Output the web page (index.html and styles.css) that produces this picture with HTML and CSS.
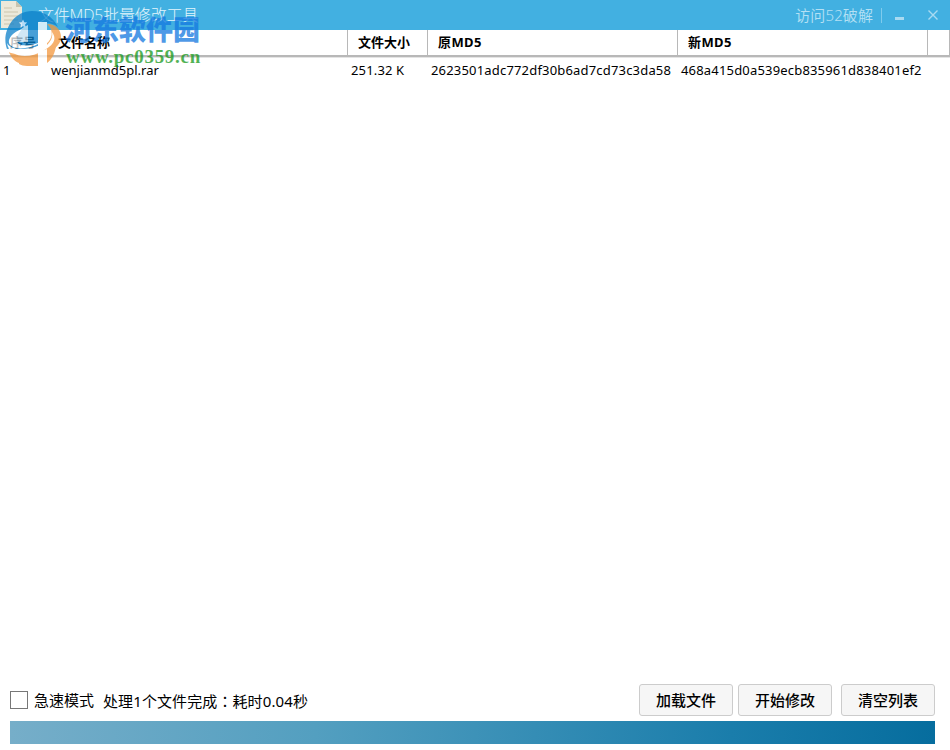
FILE: index.html
```html
<!DOCTYPE html>
<html lang="zh-CN">
<head>
  <meta charset="UTF-8">
  <title>文件MD5批量修改工具</title>
  <link rel="stylesheet" href="styles.css">
</head>
<body>
  <div class="window">
    <header class="titlebar">
      <svg class="app-icon" width="24" height="30" viewBox="0 0 24 30">
        <path d="M1 1h15l6 6v21H1z" fill="#ece9da"/>
        <path d="M16 1v6h6z" fill="#c9c4ae"/>
        <path d="M4 8h8M4 12h14M4 16h14M4 20h14M4 24h10" stroke="#d6d1bc" stroke-width="1.5"/>
      </svg>
      <h1>文件MD5批量修改工具</h1>
      <a class="visit">访问52破解</a>
      <span class="divider"></span>
      <svg class="win-btns" width="56" height="30" viewBox="0 0 56 30">
        <rect x="13" y="17" width="9" height="3" fill="#a9daf1"/>
        <path d="M46.5 10.5l9 9M55.5 10.5l-9 9" stroke="#a9daf1" stroke-width="1.4"/>
      </svg>
    </header>

    <div class="grid head">
      <div>序号</div>
      <div>文件名称</div>
      <div>文件大小</div>
      <div>原MD5</div>
      <div>新MD5</div>
      <div></div>
    </div>
    <div class="grid row">
      <div>1</div>
      <div class="name">wenjianmd5pl.rar</div>
      <div class="size">251.32 K</div>
      <div class="md5">2623501adc772df30b6ad7cd73c3da58</div>
      <div class="md5">468a415d0a539ecb835961d838401ef2</div>
    </div>

    <footer>
      <div class="actions">
        <span class="checkbox"></span>
        <span class="mode">急速模式</span>
        <span class="status">处理1个文件完成<span class="colon" lang="zh-TW">：</span>耗时0.04秒</span>
        <button>加载文件</button>
        <button>开始修改</button>
        <button class="clear">清空列表</button>
      </div>
      <div class="progress"></div>
    </footer>

    <!-- site watermark -->
    <div class="watermark">
      <svg class="wm-logo" width="64" height="70" viewBox="0 0 64 70">
        <!-- blue dome -->
        <path d="M7 49C1 34 12 11 32 11c12 0 21 6 26 16-4-3-8-4-11-4L38 22v24c-8 4-19 6-25 2z" fill="#0c80ca"/>
        <!-- right ring -->
        <path d="M47 24c9 0 14 6 14 13 0 9-9 14-19 18-13 5-25 4-33-2 14 3 29-3 37-9 7-5 8-14 1-20z" fill="#f3983e"/>
        <!-- base -->
        <path d="M9 52c3 2 6 3 10 3v8c-5-2-8-6-10-11zM19 56h19v10H27c-3 0-6-1-8-2zM47 50l9-4c-1 7-4 13-9 17z" fill="#f3983e"/>
        <!-- white orbit and pillars -->
        <path d="M22 29c-9 3-14 9-13 14 2 7 18 7 29 1v-1c-8 3-20 4-21-2-1-4 2-8 5-12z" fill="#fff"/>
        <path d="M24 27l4-2v17H15c0-6 4-12 9-15z" fill="#fff" opacity=".75"/>
        <path d="M7 43c4 8 20 7 31 3V22h9v23c4-4 6-8 5-13 6 8 0 14-9 19-14 8-34 7-36-8z" fill="#fff"/>
        <path d="M38 52l9-3v15l-9 2z" fill="#fff"/>
        <path d="M23 19.5l1.3 2.7 2.9.4-2.1 2 .5 3-2.6-1.4-2.6 1.4.5-3-2.1-2 2.9-.4z" fill="#d9ebff"/>
      </svg>
      <div class="wm-name">河东软件园</div>
      <div class="wm-url">www.pc0359.cn</div>
    </div>
  </div>
</body>
</html>
```

FILE: styles.css
```css
* {
  box-sizing: border-box;
  margin: 0;
  padding: 0;
}

body {
  font-family: "Noto Sans", "Noto Sans CJK SC", sans-serif;
  background: #fff;
  color: #000;
}

.window {
  position: relative;
  width: 950px;
  height: 750px;
  display: flex;
  flex-direction: column;
  overflow: hidden;
}

.titlebar {
  height: 30px;
  display: flex;
  align-items: center;
  background: #42b0e1;
  color: #b5e0f4;
}

h1 {
  margin-left: 14px;
  flex: 1;
  font-family: "Open Sans", "Noto Sans CJK SC", sans-serif;
  font-size: 16px;
  font-weight: 300;
  letter-spacing: -0.2px;
  line-height: 30px;
  color: #e4f5fd;
}

.visit {
  font-size: 15px;
  font-weight: 350;
  letter-spacing: 0.1px;
  line-height: 30px;
}

.divider {
  width: 1px;
  height: 15px;
  margin-left: 8px;
  background: #7fcbed;
}

.win-btns {
  margin-right: 12px;
}

.grid {
  display: grid;
  grid-template-columns: 48px 300px 80px 250px 250px 22px;
  white-space: nowrap;
}

.head {
  height: 27px;
  border-bottom: 2px solid #b8b8b8;
  box-shadow: 0 1px 0 #e4e4e4;
  font-size: 13px;
  font-weight: bold;
  line-height: 25px;
}

.head div {
  padding-left: 10px;
  border-right: 1px solid #b8b8b8;
}

.head div:first-child {
  border-right: none;
}

.head div:nth-child(4),
.head div:nth-child(5) {
  letter-spacing: 0.4px;
}

.row {
  font-size: 13px;
  line-height: 27px;
}

.row div {
  padding-left: 3px;
}

.row .size {
  letter-spacing: 0.15px;
}

.row .md5 {
  letter-spacing: 0.18px;
}

footer {
  margin-top: auto;
  padding: 0 15px 6px 10px;
}

.actions {
  height: 32px;
  margin-bottom: 5px;
  display: flex;
  align-items: center;
}

.checkbox {
  width: 18px;
  height: 18px;
  border: 1px solid #777;
}

.mode {
  margin: 0 0 2px 6px;
  font-size: 15px;
}

.status {
  margin: 0 auto 0 9px;
  font-size: 15px;
  letter-spacing: 0.1px;
}

.colon {
  font-family: "Noto Sans CJK TC", sans-serif;
  line-height: 1;
}

button {
  width: 94px;
  height: 32px;
  margin-left: 5px;
  padding-bottom: 2px;
  border: 1px solid #ccc;
  border-radius: 3px;
  background: #f6f6f6;
  font-family: inherit;
  font-size: 15px;
  font-weight: 500;
  color: #000;
}

.clear {
  margin-left: 9px;
}

.progress {
  height: 23px;
  background: linear-gradient(to right, #76aec9, #539fc0 33%, #1a7dab 78%, #066d9e);
}

.watermark {
  position: absolute;
  left: 0;
  top: 0;
  width: 210px;
  height: 72px;
  opacity: 0.75;
}

.wm-logo {
  position: absolute;
  left: 0;
  top: 0;
}

.wm-name {
  position: absolute;
  left: 65px;
  top: 12px;
  font-size: 27px;
  font-weight: 900;
  line-height: 36px;
  color: #1478e0;
  white-space: nowrap;
}

.wm-url {
  position: absolute;
  left: 66px;
  top: 46px;
  font-family: "Liberation Serif", serif;
  font-size: 19px;
  font-weight: bold;
  letter-spacing: 0.72px;
  line-height: 22px;
  color: #189a1c;
}
```
